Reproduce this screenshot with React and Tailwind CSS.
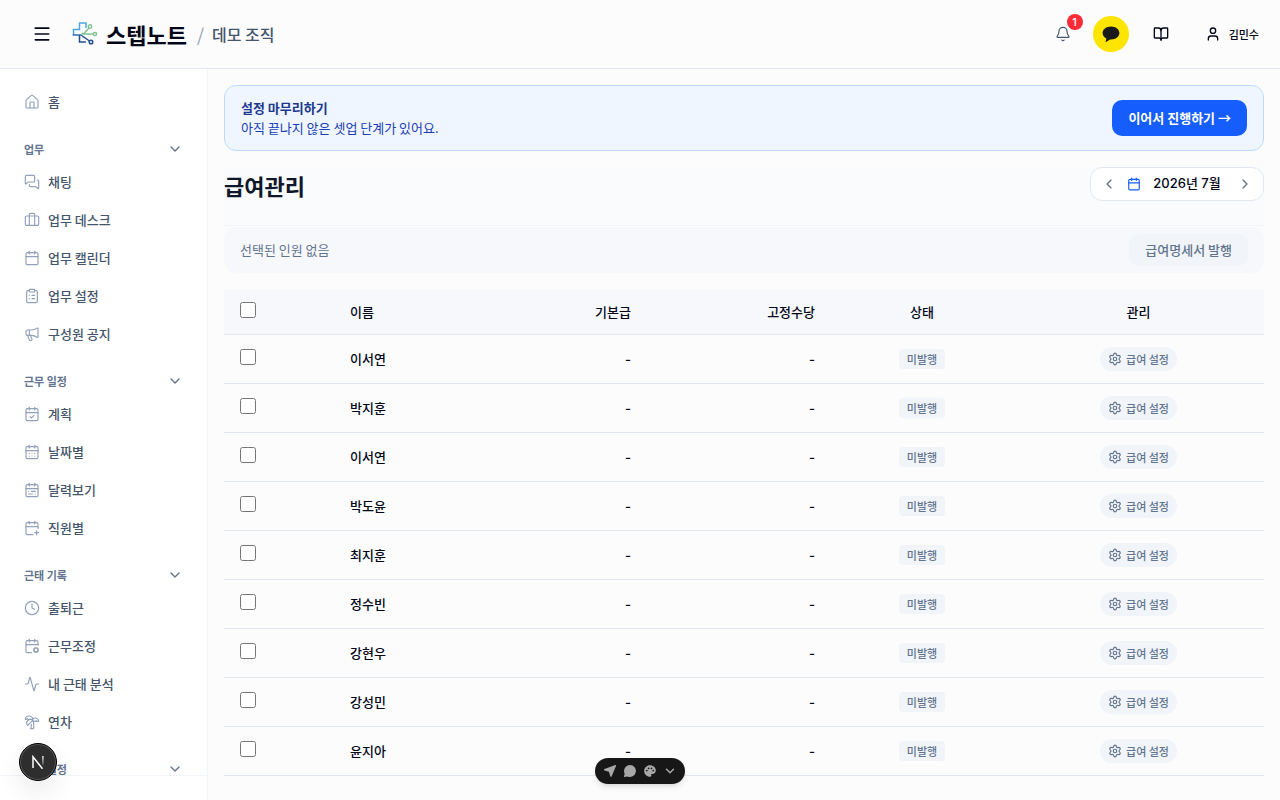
import React, { useState } from 'react';
import {
  Activity,
  Bell,
  BookOpen,
  Briefcase,
  Calendar,
  CalendarCheck,
  CalendarCog,
  CalendarDays,
  CalendarPlus,
  CalendarRange,
  ChevronDown,
  ChevronLeft,
  ChevronRight,
  ClipboardList,
  Clock,
  House,
  Megaphone,
  Menu,
  MessagesSquare,
  Settings,
  TreePalm,
  User,
} from 'lucide-react';
import { MdPalette } from 'react-icons/md';

const sections = [
  {
    title: '업무',
    items: [
      { label: '채팅', icon: MessagesSquare },
      { label: '업무 데스크', icon: Briefcase },
      { label: '업무 캘린더', icon: Calendar },
      { label: '업무 설정', icon: ClipboardList },
      { label: '구성원 공지', icon: Megaphone },
    ],
  },
  {
    title: '근무 일정',
    items: [
      { label: '계획', icon: CalendarCheck },
      { label: '날짜별', icon: CalendarDays },
      { label: '달력보기', icon: CalendarRange },
      { label: '직원별', icon: CalendarPlus },
    ],
  },
  {
    title: '근태 기록',
    items: [
      { label: '출퇴근', icon: Clock },
      { label: '근무조정', icon: CalendarCog },
      { label: '내 근태 분석', icon: Activity },
      { label: '연차', icon: TreePalm },
    ],
  },
  { title: '급여 설정', items: [] },
];

const employees = ['이서연', '박지훈', '이서연', '박도윤', '최지훈', '정수빈', '강현우', '강성민', '윤지아'];

const Logo = () => (
  <svg width="26" height="26" viewBox="0 0 26 26" fill="none" strokeWidth="1.5" aria-hidden="true">
    <path d="M1.500 13.500V8.500h6V2h6.500v5" stroke="#4aa8e8" />
    <path d="M1.500 13v1h7.500l2.500 2" stroke="#2f6fb5" />
    <path d="M7.500 14v7H14M11 15.500l6.500 4.500" stroke="#234f91" />
    <circle cx="19" cy="21" r="1.800" stroke="#234f91" />
    <path d="M10 13h11.500" stroke="#84c493" />
    <circle cx="23" cy="13" r="1.600" stroke="#84c493" />
    <path d="M9.500 12.500h2.500l5-5.500" stroke="#84c493" />
    <circle cx="18" cy="5.500" r="1.700" stroke="#84c493" />
  </svg>
);

const Header = () => (
  <header className="flex h-[69px] shrink-0 items-center justify-between border-b border-slate-200 pr-[21px] pl-8">
    <div className="flex items-center">
      <button type="button" aria-label="메뉴" className="text-slate-950">
        <Menu size={20} strokeWidth={2} />
      </button>
      <a href="#home" className="ml-5 flex items-center gap-2">
        <Logo />
        <span className="text-[22px] leading-8 font-bold text-slate-950">스텝노트</span>
      </a>
      <span className="ml-2.5 text-lg text-slate-400">/</span>
      <span className="ml-2 text-base font-medium text-slate-600">데모 조직</span>
    </div>

    <div className="flex items-center">
      <button type="button" aria-label="알림" className="relative p-2 text-slate-600">
        <Bell size={16} strokeWidth={1.75} />
        <span className="absolute -top-1 -right-1 flex size-4 items-center justify-center rounded-full bg-[#fb2c36] font-['Inter'] text-[11px] leading-4 font-medium text-white">
          1
        </span>
      </button>
      <button
        type="button"
        aria-label="카카오톡 문의"
        className="ml-3.5 flex size-9 items-center justify-center rounded-full bg-[#fee500]"
      >
        <svg width="18" height="18" viewBox="0 0 18 18" fill="#191919" aria-hidden="true">
          <path d="M9 1.500C4.300 1.500.600 4.400.600 8c0 2.300 1.500 4.300 3.800 5.500L3.600 16.700c-.1.300.2.500.5.300L8 14.400l1 .100c4.700 0 8.400-2.900 8.400-6.500S13.700 1.500 9 1.500z" />
        </svg>
      </button>
      <button type="button" aria-label="가이드" className="ml-4 p-2 text-slate-950">
        <BookOpen size={16} />
      </button>
      <button type="button" className="ml-7 flex items-center gap-2 text-[11px] font-medium text-slate-950">
        <User size={16} />
        김민수
      </button>
    </div>
  </header>
);

const NavItem = ({ icon: Icon, label }) => (
  <a href="#menu" className="flex h-[38px] items-center gap-2 px-2 text-[13px] font-medium text-slate-600">
    <Icon size={16} strokeWidth={1.75} className="shrink-0 text-slate-400" />
    <span>{label}</span>
  </a>
);

const Sidebar = () => (
  <aside className="flex w-52 shrink-0 flex-col border-r border-slate-100 bg-white">
    <nav className="min-h-0 flex-1 overflow-hidden px-4 pt-3.5">
      <NavItem icon={House} label="홈" />
      {sections.map((section) => (
        <div key={section.title} className="mt-3.5">
          <button
            type="button"
            className="flex h-7 w-full items-center justify-between px-2 text-[11px] font-bold text-slate-500"
          >
            {section.title}
            <ChevronDown size={16} />
          </button>
          {section.items.map((item) => (
            <NavItem key={item.label} icon={item.icon} label={item.label} />
          ))}
        </div>
      ))}
    </nav>
    <div className="h-[25px] shrink-0 border-t border-slate-100" />
  </aside>
);

const SetupBanner = () => (
  <section className="flex items-center justify-between rounded-xl border border-blue-200 bg-blue-50 px-4 py-3.5 text-[13px] leading-5">
    <div className="-my-1">
      <p className="font-bold text-blue-900">설정 마무리하기</p>
      <p className="text-blue-800">아직 끝나지 않은 셋업 단계가 있어요.</p>
    </div>
    <button type="button" className="h-9 rounded-[10px] bg-[#155dfc] px-4 font-bold text-white">
      이어서 진행하기 →
    </button>
  </section>
);

const MonthPicker = ({ month, onChange }) => (
  <div className="flex h-[34px] w-[174px] items-center justify-between rounded-xl border border-slate-200 bg-white px-2.5">
    <button type="button" aria-label="이전 달" onClick={() => onChange(month - 1)} className="text-slate-500">
      <ChevronLeft size={16} />
    </button>
    <button
      type="button"
      className="flex items-center gap-3 pr-1.5 font-['Inter','Noto_Sans_CJK_KR',sans-serif] text-[13px] font-medium text-slate-950"
    >
      <Calendar size={14} className="text-blue-600" />
      2026년 {month}월
    </button>
    <button type="button" aria-label="다음 달" onClick={() => onChange(month + 1)} className="text-slate-500">
      <ChevronRight size={16} />
    </button>
  </div>
);

const PayrollTable = ({ selected, onToggle, onToggleAll }) => (
  <table className="mt-[17px] w-full table-fixed text-[13px] leading-5 text-slate-950">
    <colgroup>
      <col className="w-[110px]" />
      <col className="w-[129px]" />
      <col className="w-[184px]" />
      <col className="w-[184px]" />
      <col className="w-[182px]" />
      <col />
    </colgroup>
    <thead>
      <tr className="h-11 border-b border-slate-200 bg-[#f7f8fc]">
        <th className="px-4 pb-1 text-left">
          <input
            type="checkbox"
            aria-label="전체 선택"
            checked={selected.length === employees.length}
            onChange={onToggleAll}
            className="block size-4"
          />
        </th>
        <th className="px-4 text-left font-medium">이름</th>
        <th className="px-4 text-right font-medium">기본급</th>
        <th className="px-4 text-right font-medium">고정수당</th>
        <th className="px-4 text-center font-medium">상태</th>
        <th className="px-4 text-center font-medium">관리</th>
      </tr>
    </thead>
    <tbody>
      {employees.map((name, index) => (
        <tr key={index} className="h-[49px] border-b border-slate-200">
          <td className="px-4 pb-1">
            <input
              type="checkbox"
              aria-label={`${name} 선택`}
              checked={selected.includes(index)}
              onChange={() => onToggle(index)}
              className="block size-4"
            />
          </td>
          <td className="px-4 font-medium">{name}</td>
          <td className="px-4 text-right font-['Inter'] font-medium">-</td>
          <td className="px-4 text-right font-['Inter'] font-medium">-</td>
          <td className="px-4 text-center">
            <span className="inline-block rounded bg-slate-100 px-2 align-middle text-[11px] leading-5 font-medium text-slate-500">
              미발행
            </span>
          </td>
          <td className="px-4 text-center">
            <button
              type="button"
              className="inline-flex h-6 items-center gap-1 rounded-full bg-slate-100 px-2 align-middle text-[11px] font-medium text-slate-500"
            >
              <Settings size={14} />
              급여 설정
            </button>
          </td>
        </tr>
      ))}
    </tbody>
  </table>
);

const DevTools = () => (
  <>
    <button
      type="button"
      aria-label="Next.js Dev Tools"
      className="fixed bottom-[19px] left-[19px] flex size-[38px] items-center justify-center rounded-full border border-black bg-[#2e2e2e] shadow-[0_12px_24px_rgba(0,0,0,0.08)] ring-1 ring-white/20 ring-inset"
    >
      <svg width="14" height="14" viewBox="0 0 14 14" fill="none" stroke="white" strokeWidth="1.5" aria-hidden="true">
        <defs>
          <linearGradient id="stem" x1="0" y1="1" x2="0" y2="11" gradientUnits="userSpaceOnUse">
            <stop stopColor="white" />
            <stop offset="1" stopColor="white" stopOpacity="0.1" />
          </linearGradient>
        </defs>
        <path d="M2 13V1.800l9.500 12" />
        <path d="M11.200 1h1.400v9h-1.400z" fill="url(#stem)" stroke="none" />
      </svg>
    </button>
    <div className="fixed bottom-4 left-1/2 flex h-[26px] w-[90px] -translate-x-1/2 items-center justify-between rounded-full bg-[#171717] px-2 text-[#a8a8a8] shadow-md">
      <button type="button" aria-label="이동">
        <svg width="14" height="14" viewBox="0 0 14 14" fill="currentColor" aria-hidden="true">
          <path d="M12.300 1.100L1.500 5c-.7.300-.7 1.200 0 1.400l4.400 1.400 1.400 4.500c.2.700 1.100.7 1.400 0L13 1.900c.2-.5-.2-1-.7-.8z" />
        </svg>
      </button>
      <button type="button" aria-label="댓글">
        <svg width="14" height="14" viewBox="0 0 14 14" fill="currentColor" aria-hidden="true">
          <path d="M7 1a6 6 0 1 1-2.500 11.500L1.200 13c-.3 0-.4-.2-.3-.5l.8-2.700A6 6 0 0 1 7 1z" />
        </svg>
      </button>
      <button type="button" aria-label="테마">
        <MdPalette size={14} />
      </button>
      <button type="button" aria-label="접기">
        <ChevronDown size={14} strokeWidth={2.5} />
      </button>
    </div>
  </>
);

const App = () => {
  const [month, setMonth] = useState(7);
  const [selected, setSelected] = useState([]);

  const handleToggle = (index) => {
    setSelected((prev) => (prev.includes(index) ? prev.filter((i) => i !== index) : [...prev, index]));
  };

  const handleToggleAll = () => {
    setSelected((prev) => (prev.length === employees.length ? [] : employees.map((_, i) => i)));
  };

  return (
    <div className="flex h-screen flex-col bg-[#fcfcfc] font-['Noto_Sans_CJK_KR',sans-serif]">
      <Header />
      <div className="flex min-h-0 flex-1">
        <Sidebar />
        <main className="min-w-0 flex-1 overflow-hidden p-4">
          <SetupBanner />

          <div className="mt-4 flex h-[59px] items-start justify-between border-b border-slate-100 bg-[#fafbfc]">
            <h1 className="text-[22px] leading-9 font-bold text-slate-900">급여관리</h1>
            <MonthPicker month={month} onChange={setMonth} />
          </div>

          <div className="mt-px flex h-[46px] items-center justify-between rounded-xl bg-[#f7f8fc] px-4 text-[13px] text-slate-500">
            <span>{selected.length ? `${selected.length}명 선택됨` : '선택된 인원 없음'}</span>
            <button type="button" className="h-8 rounded-[10px] bg-slate-100 px-4 font-medium">
              급여명세서 발행
            </button>
          </div>

          <PayrollTable selected={selected} onToggle={handleToggle} onToggleAll={handleToggleAll} />
        </main>
      </div>
      <DevTools />
    </div>
  );
};

export default App;
